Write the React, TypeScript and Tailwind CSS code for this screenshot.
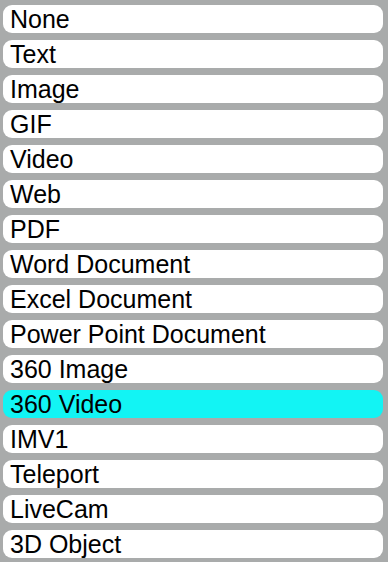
const items = [
  "None",
  "Text",
  "Image",
  "GIF",
  "Video",
  "Web",
  "PDF",
  "Word Document",
  "Excel Document",
  "Power Point Document",
  "360 Image",
  "360 Video",
  "IMV1",
  "Teleport",
  "LiveCam",
  "3D Object",
];

const SELECTED = "360 Video";

export default function App() {
  return (
    <div
      className="w-[388px] h-[562px] bg-[#a9abab] pt-[5px] pl-[3px] pr-[5px] flex flex-col gap-[7px]"
      style={{ fontFamily: '"Liberation Sans", Arial, sans-serif' }}
    >
      {items.map((item) => (
        <div
          key={item}
          className={`h-[28px] rounded-[9px] pl-[7px] text-[25px] leading-[28px] text-black whitespace-nowrap ${
            item === SELECTED ? "bg-[#12f4f4]" : "bg-white"
          }`}
        >
          {item}
        </div>
      ))}
    </div>
  );
}
